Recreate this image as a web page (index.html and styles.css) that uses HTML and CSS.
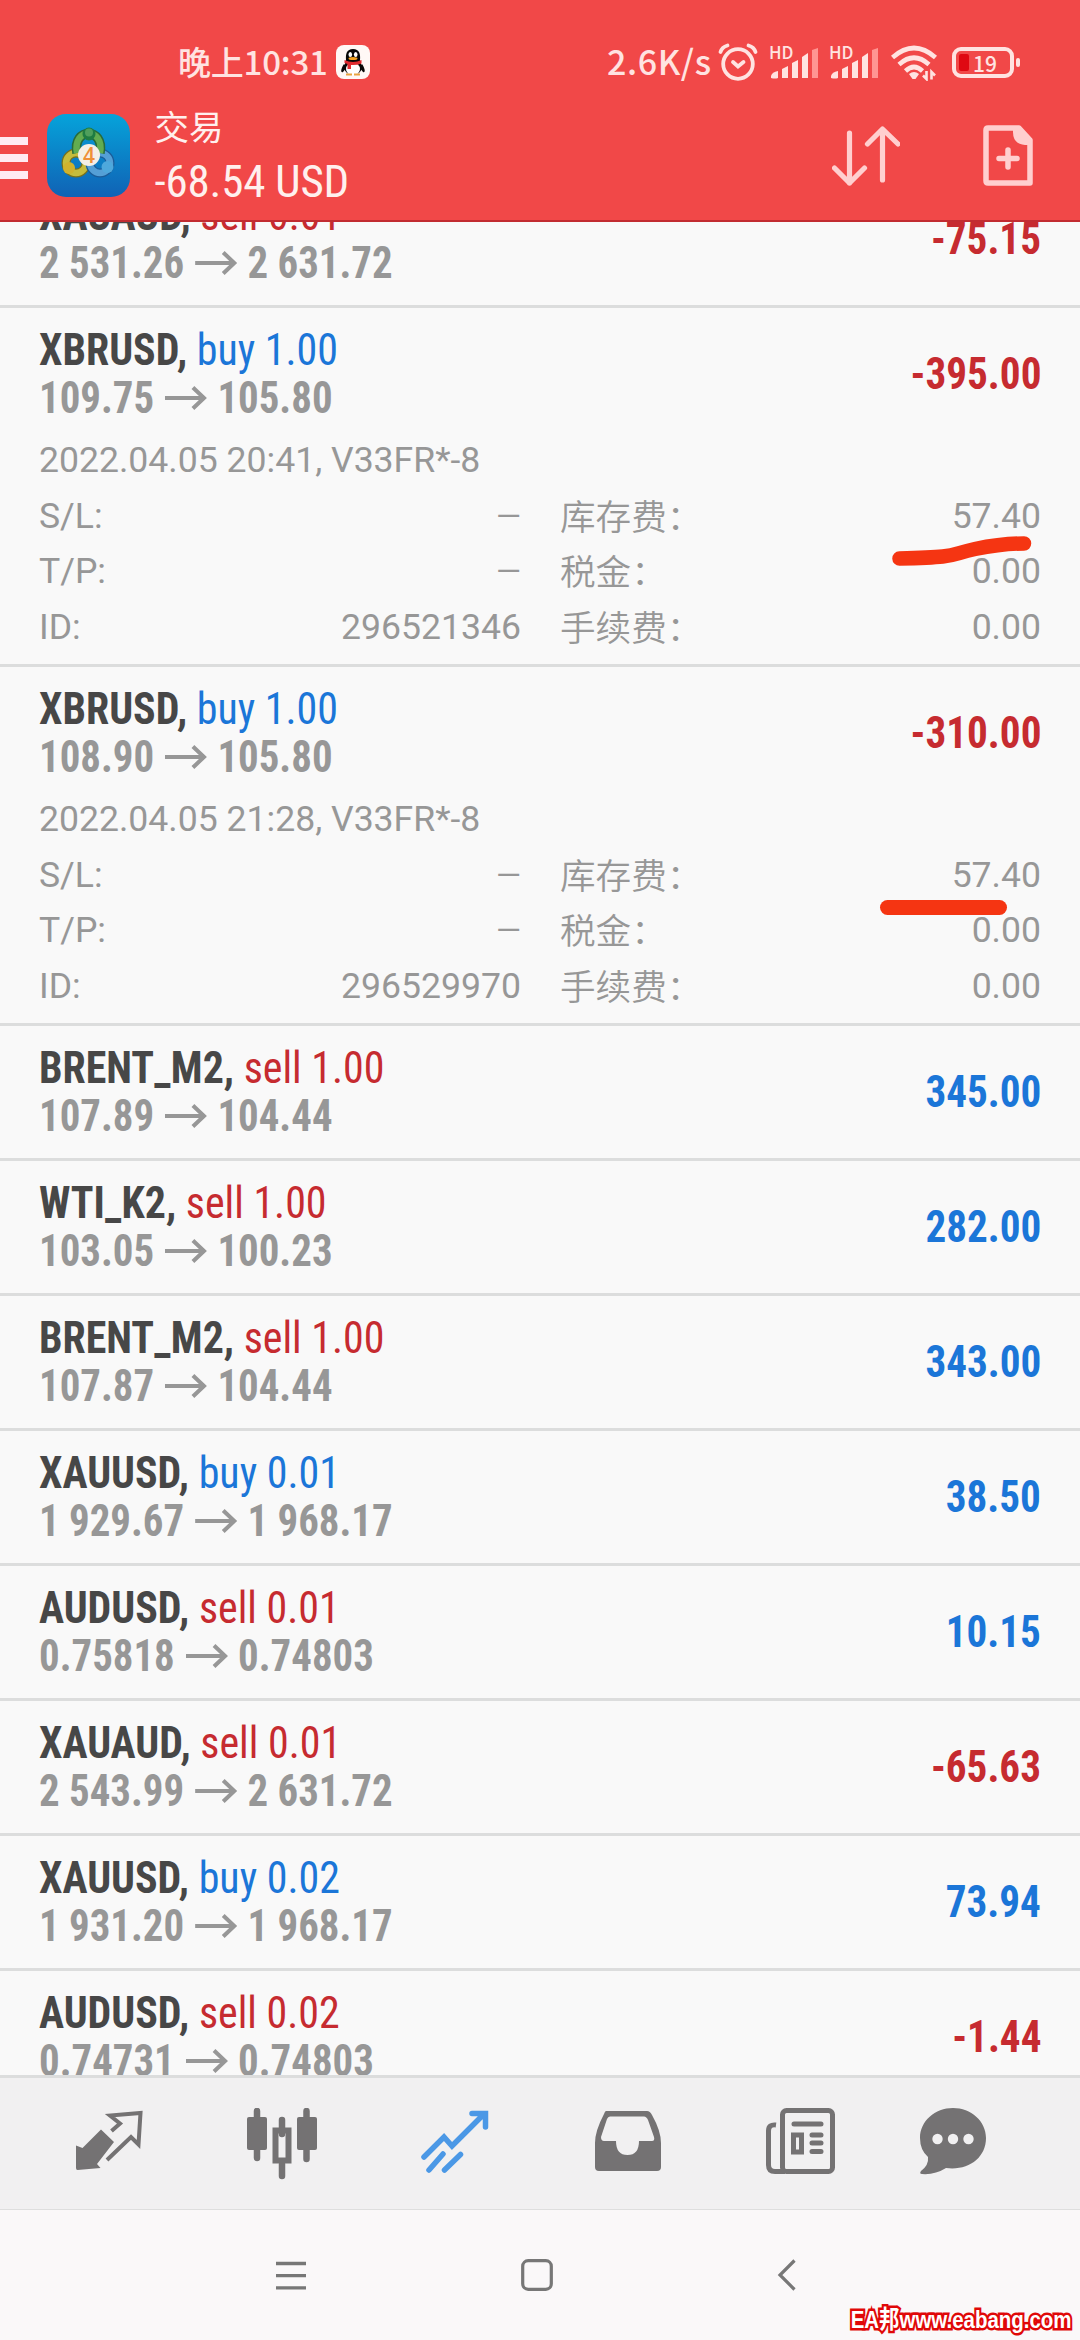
FILE: index.html
```html
<!DOCTYPE html>
<html lang="zh-CN">
<head>
<meta charset="utf-8">
<title>交易</title>
<link rel="stylesheet" href="styles.css">
</head>
<body>
<svg class="defs" width="0" height="0">
  <symbol id="arrow" viewBox="0 0 42 24" preserveAspectRatio="none"><path d="M0 12H40M28 1.500L39 12L28 22.500" fill="none" stroke="#979797" stroke-width="4"/></symbol>
  <symbol id="signal" viewBox="0 0 48 32"><g fill="#ffe3e1"><path d="M0 31V29Q1 25 7 24V31Q4 32 0 31Z"/><path d="M11 31V22L17 19V31Z"/><path d="M21 31V16L27 13V31Z"/><path d="M31 31V10L37 6V31Z"/></g><path d="M41 31V3L47 1V31Z" fill="#ff9592"/></symbol>
</svg>
<div class="screen">
  <header class="header">
    <div class="status">
      <div class="clock"><span>晚上10:31</span>
        <svg class="qq" viewBox="0 0 34 34"><rect width="34" height="34" rx="8" fill="#fff8f6"/><path d="M8 19C4 25 5 28 7 27L11 22ZM26 19C30 25 29 28 27 27L23 22Z" fill="#080808"/><path d="M17 4C10.500 4 9.500 9 10 15L8 23Q10 30 17 30Q24 30 26 23L24 15C24.500 9 23.500 4 17 4Z" fill="#080808"/><ellipse cx="17" cy="24" rx="7" ry="6.500" fill="#fff"/><ellipse cx="14.300" cy="9.500" rx="1.800" ry="2.600" fill="#fff"/><ellipse cx="19.700" cy="9.500" rx="1.800" ry="2.600" fill="#fff"/><ellipse cx="17" cy="13.500" rx="4.500" ry="1.500" fill="#f5a321"/><path d="M8.500 15Q17 19 25.500 15V18.500Q20 20.500 15 20V24H11.500V19L8.500 18Z" fill="#e02b30"/><path d="M10 29.500H16M18 29.500H24" stroke="#e9a440" stroke-width="2"/></svg>
      </div>
      <div class="indicators">
        <span class="speed">2.6K/s</span>
        <svg class="alarm" viewBox="0 0 40 38"><g fill="none" stroke="#ffe3e1" stroke-width="3.800" stroke-linecap="round"><circle cx="20" cy="21" r="14.800"/><path d="M2.500 9Q4 4 9.500 2.500M37.500 9Q36 4 30.500 2.500M15 19L20 23.500L25.500 19"/></g></svg>
        <div class="sim"><b>HD</b><svg viewBox="0 0 48 32"><use href="#signal"/></svg></div>
        <div class="sim"><b>HD</b><svg viewBox="0 0 48 32"><use href="#signal"/></svg></div>
        <svg class="wifi" viewBox="0 0 46 36"><g fill="none" stroke="#ffe3e1" stroke-width="4.600"><path d="M1.500 12.500Q23-6.500 44.500 12.500M8 19.500Q23 6 38 19.500M14.500 26Q23 18 31.500 26"/></g><path d="M18 29Q23 25 28 29L24.500 34H21.500Z" fill="#ffe3e1"/><path d="M35.500 26V34L32 30.500M40.500 34.500V27L44 30.500" fill="none" stroke="#ffe3e1" stroke-width="2.600"/></svg>
        <div class="battery"><i></i><span>19</span></div>
      </div>
    </div>
    <div class="toolbar">
      <div class="burger"><i></i><i></i><i></i></div>
      <svg class="logo" viewBox="0 0 83 83"><defs><linearGradient id="sky" x2="0" y2="1"><stop stop-color="#06a3da"/><stop offset="1" stop-color="#1062b5"/></linearGradient></defs><rect width="83" height="83" rx="19" fill="url(#sky)"/><g fill="none"><circle cx="29" cy="49" r="10" stroke="#77701c" stroke-width="9"/><circle cx="29" cy="49" r="10" stroke="#c6bc3c" stroke-width="6.500"/><circle cx="53" cy="49" r="10" stroke="#1b5c98" stroke-width="9"/><circle cx="53" cy="49" r="10" stroke="#549fd6" stroke-width="6.500"/><path d="M30 39C25 13 58 13 53 39" stroke="#286b3a" stroke-width="9.500"/><path d="M30 39C25 13 58 13 53 39" stroke="#62ac50" stroke-width="6.500"/></g><circle cx="42" cy="20" r="6.500" fill="#1f7c42"/><circle cx="42" cy="18.500" r="4" fill="#4f9f5c"/><circle cx="22" cy="54" r="6" fill="#d0b22d"/><circle cx="60.500" cy="53" r="6" fill="#4ea8dc"/><circle cx="42" cy="41" r="11" fill="#f4efe6"/><text x="42" y="49" text-anchor="middle" class="four">4</text></svg>
      <div class="title"><span class="name">交易</span><span class="total">-68.54 USD</span></div>
      <svg class="sort" viewBox="0 0 68 62"><path d="M17.500 8V58M2.500 43L17.500 58L32.500 43M50.500 55V5M35.500 19L50.500 4L66 19" fill="none" stroke="#ffcfcf" stroke-width="5.200" stroke-linecap="round" stroke-linejoin="round"/></svg>
      <svg class="neworder" viewBox="0 0 50 62"><path d="M5 3H36L47 15V58H5Q3 58 3 56V5Q3 3 5 3Z" fill="none" stroke="#ffcfcf" stroke-width="5.500" stroke-linejoin="round"/><path d="M30 3H37L48 14V20H42Q30 19 30 7Z" fill="#ffcfcf"/><path d="M25 25V42M16 33.500H34" stroke="#ffcfcf" stroke-width="5.500" stroke-linecap="round"/></svg>
    </div>
  </header>

  <main class="list">
    <article class="row first"><div class="head"><div><p class="deal"><b>XAUAUD,</b> <span class="sell">sell 0.01</span></p><p class="price">2 531.26<svg><use href="#arrow"/></svg>2 631.72</p></div><strong class="sell">-75.15</strong></div></article>

    <article class="row">
      <div class="head"><div><p class="deal"><b>XBRUSD,</b> <span class="buy">buy 1.00</span></p><p class="price">109.75<svg><use href="#arrow"/></svg>105.80</p></div><strong class="sell">-395.00</strong></div>
      <div class="details">
        <p class="date">2022.04.05 20:41, V33FR*-8</p>
        <p><span>S/L:</span><span class="none">—</span></p><p><span>库存费：</span><span>57.40</span></p>
        <p><span>T/P:</span><span class="none">—</span></p><p><span>税金：</span><span>0.00</span></p>
        <p><span>ID:</span><span>296521346</span></p><p><span>手续费：</span><span>0.00</span></p>
        <svg class="mark" viewBox="0 0 140 30"><path d="M7.500 22.500C70 21 55 19 83 13C108 8 118 7.500 132 7.500" fill="none" stroke="#f53512" stroke-width="14.500" stroke-linecap="round"/></svg>
      </div>
    </article>

    <article class="row">
      <div class="head"><div><p class="deal"><b>XBRUSD,</b> <span class="buy">buy 1.00</span></p><p class="price">108.90<svg><use href="#arrow"/></svg>105.80</p></div><strong class="sell">-310.00</strong></div>
      <div class="details">
        <p class="date">2022.04.05 21:28, V33FR*-8</p>
        <p><span>S/L:</span><span class="none">—</span></p><p><span>库存费：</span><span>57.40</span></p>
        <p><span>T/P:</span><span class="none">—</span></p><p><span>税金：</span><span>0.00</span></p>
        <p><span>ID:</span><span>296529970</span></p><p><span>手续费：</span><span>0.00</span></p>
        <i class="mark straight"></i>
      </div>
    </article>

    <article class="row"><div class="head"><div><p class="deal"><b>BRENT_M2,</b> <span class="sell">sell 1.00</span></p><p class="price">107.89<svg><use href="#arrow"/></svg>104.44</p></div><strong class="buy">345.00</strong></div></article>
    <article class="row"><div class="head"><div><p class="deal"><b>WTI_K2,</b> <span class="sell">sell 1.00</span></p><p class="price">103.05<svg><use href="#arrow"/></svg>100.23</p></div><strong class="buy">282.00</strong></div></article>
    <article class="row"><div class="head"><div><p class="deal"><b>BRENT_M2,</b> <span class="sell">sell 1.00</span></p><p class="price">107.87<svg><use href="#arrow"/></svg>104.44</p></div><strong class="buy">343.00</strong></div></article>
    <article class="row"><div class="head"><div><p class="deal"><b>XAUUSD,</b> <span class="buy">buy 0.01</span></p><p class="price">1 929.67<svg><use href="#arrow"/></svg>1 968.17</p></div><strong class="buy">38.50</strong></div></article>
    <article class="row"><div class="head"><div><p class="deal"><b>AUDUSD,</b> <span class="sell">sell 0.01</span></p><p class="price">0.75818<svg><use href="#arrow"/></svg>0.74803</p></div><strong class="buy">10.15</strong></div></article>
    <article class="row"><div class="head"><div><p class="deal"><b>XAUAUD,</b> <span class="sell">sell 0.01</span></p><p class="price">2 543.99<svg><use href="#arrow"/></svg>2 631.72</p></div><strong class="sell">-65.63</strong></div></article>
    <article class="row"><div class="head"><div><p class="deal"><b>XAUUSD,</b> <span class="buy">buy 0.02</span></p><p class="price">1 931.20<svg><use href="#arrow"/></svg>1 968.17</p></div><strong class="buy">73.94</strong></div></article>
    <article class="row"><div class="head"><div><p class="deal"><b>AUDUSD,</b> <span class="sell">sell 0.02</span></p><p class="price">0.74731<svg><use href="#arrow"/></svg>0.74803</p></div><strong class="sell">-1.44</strong></div></article>
  </main>

  <nav class="tabs">
    <svg viewBox="0 0 72 72"><path d="M3 37.500L9.500 40L28 21.500L41 34L24 56L27.500 60L4.500 62Q3 62 3 60Z" fill="#747273"/><path d="M38.500 23L47 15.500L37 7.500L67.500 5L65.500 36.500L58 29L34 52" fill="none" stroke="#747273" stroke-width="4"/></svg>
    <svg viewBox="0 0 72 72"><path d="M11 3V50M60.500 3V51M36 12V26M36 56V68" stroke="#747273" stroke-width="6.500" stroke-linecap="round"/><rect x="1" y="9" width="20" height="33" rx="2" fill="#747273"/><rect x="51" y="9" width="20" height="33" rx="2" fill="#747273"/><rect x="29.500" y="22.500" width="13" height="30" fill="none" stroke="#747273" stroke-width="6"/></svg>
    <svg viewBox="0 0 72 72"><path d="M5 49L25 29L33 38L65 6M53 5.500H66.500V19M24 46L10 62M41.500 46.500L25.500 62" fill="none" stroke="#4b98e6" stroke-width="5.500" stroke-linecap="round"/></svg>
    <svg viewBox="0 0 72 72"><path d="M14 3H55Q58 3 60 7Q69 23 69 35V59Q69 63 65 63H7Q3 63 3 59V35Q3 23 12 6Q13 3 14 3ZM18 8.500Q16 8.500 15 11L9 29Q9 33 12 33H24Q24 47 35.500 47Q47 47 47 33H60Q63 33 62 29L56 12Q54.500 8.500 52 8.500Z" fill="#747273" fill-rule="evenodd"/></svg>
    <svg viewBox="0 0 72 72"><g fill="none" stroke="#747273" stroke-width="5"><rect x="17.500" y="2.500" width="50" height="61" rx="4"/><path d="M11 17Q3.500 16 3.500 23V57Q3.500 63.500 10 63.500H20"/><path d="M29 16H56M47 27H56M47 35H56M47 43.500H56" stroke-linecap="round"/><rect x="28.500" y="27" width="8" height="17"/></g></svg>
    <svg viewBox="0 0 72 72"><path d="M36 0C54 0 69 13 69 30C69 50 51 63 29 60Q18 67 5 66Q2 66 4 63Q12 57 11 49Q3 42 3 30C3 13 18 0 36 0Z" fill="#747273"/><g fill="#f1f0f1"><circle cx="20.500" cy="31" r="5.200"/><circle cx="36" cy="31" r="5.200"/><circle cx="51.500" cy="31" r="5.200"/></g></svg>
  </nav>

  <footer class="system">
    <svg class="recents" viewBox="0 0 30 30"><path d="M0 2.500H30M0 14.700H30M0 26.800H30" stroke="#777" stroke-width="3.300"/></svg>
    <svg class="home" viewBox="0 0 32 32"><rect x="1.700" y="1.700" width="28.600" height="28.600" rx="5.500" fill="none" stroke="#777" stroke-width="3.200"/></svg>
    <svg class="back" viewBox="0 0 20 32"><path d="M17.500 1.500L3 16L17.500 30.500" fill="none" stroke="#777" stroke-width="3.200"/></svg>
    <span class="credit">EA邦www.eabang.com</span>
  </footer>
</div>
</body>
</html>
```
FILE: styles.css
```css
* { box-sizing: border-box; }
body { margin: 0; background: #f9f9f9; font-family: Roboto, "Noto Sans CJK SC", sans-serif; }
p { margin: 0; }
svg { display: block; flex: none; }
.defs { position: absolute; }
.screen { width: 1080px; height: 2340px; display: flex; flex-direction: column; overflow: hidden; }

/* header */
.header { height: 222px; flex: none; background: #f14848; border-bottom: 2px solid #c22c31; }
.status { display: flex; height: 100px; padding: 0 60px 0 178px; justify-content: space-between; color: #ffe3e1; }
.clock { display: flex; padding-top: 37px; font: 500 33px/48px "Noto Sans CJK SC", sans-serif; }
.clock span { width: 158px; white-space: nowrap; letter-spacing: -.2px; }
.qq { width: 34px; height: 34px; margin-top: 8px; }
.indicators { display: flex; }
.speed { width: 112px; padding-top: 37px; font: 500 34px/48px "Noto Sans CJK SC", sans-serif; letter-spacing: .6px; }
.alarm { width: 40px; height: 38px; margin: 43px 11px 0 -1px; }
.sim { width: 60px; padding-top: 44px; }
.sim b { display: block; height: 12px; font: 500 17px/16px "Noto Sans CJK SC", sans-serif; }
.sim svg { width: 48px; height: 32px; margin: -9px 0 0 2px; }
.wifi { width: 46px; height: 36px; margin: 45px 15px 0 2px; }
.battery { position: relative; width: 62px; height: 31px; margin: 47px 6px 0 0; border: 4px solid #ffe3e1; border-radius: 9px; display: flex; align-items: center; padding-left: 3px; font: 500 21px/24px "Noto Sans CJK SC", sans-serif; }
.battery i { width: 10px; height: 17px; border-radius: 2px; background: #df0912; margin-right: 4px; }
.battery::after { content: ""; position: absolute; left: 60px; top: 7px; width: 4px; height: 9px; border-radius: 2px; background: #ffe3e1; }
.toolbar { display: flex; height: 120px; }
.burger { display: flex; flex-direction: column; gap: 9px; width: 47px; padding-top: 37px; }
.burger i { width: 28px; height: 8px; background: #ffebf2; }
.logo { width: 83px; height: 83px; margin-top: 14px; }
.four { font: 600 21px "Open Sans", sans-serif; fill: #ef9038; }
.title { display: flex; flex-direction: column; flex: 1; padding-left: 24.500px; color: #fff0ee; }
.name { font: 400 34.500px/50px "Noto Sans CJK SC", sans-serif; }
.total { font: 45px/64px "Roboto Condensed", Roboto, sans-serif; font-stretch: 75%; letter-spacing: -.2px; }
.sort { width: 68px; height: 62px; margin: 25px 83px 0 0; }
.neworder { width: 50px; height: 62px; margin: 25px 47px 0 0; }

/* positions */
.list { height: 1853px; flex: none; overflow: hidden; background: #f9f9f9; }
.row { border-bottom: 3px solid #dcdddd; padding: 18px 39px 18px; }
.row:has(.details) { padding-bottom: 9px; }
.first { margin-top: -49px; }
.head { display: flex; justify-content: space-between; align-items: center; height: 96px; font: 44.500px/48px "Roboto Condensed", Roboto, sans-serif; }
.deal { transform: scaleX(.942); transform-origin: left; }
.deal b { color: #474747; }
.price { display: flex; align-items: center; font-weight: 700; color: #979797; transform: scaleX(.918); transform-origin: left; }
.price svg { width: 46px; height: 24px; margin: 0 11px 0 12px; }
.head strong { transform: scaleX(.925); transform-origin: right; }
.buy { color: #1b76d8; }
.sell { color: #c62b30; }
.details { position: relative; display: grid; grid-template-columns: 482px 481px; column-gap: 39px; margin-top: 11px; font-size: 35.600px; line-height: 55.500px; color: #979797; }
.details p { display: flex; justify-content: space-between; height: 55.500px; font-family: Roboto, sans-serif; }
.details .date { grid-column: 1 / 3; }
.details p:nth-child(odd) span:first-child { font-family: "Noto Sans CJK SC", sans-serif; font-weight: 350; line-height: 51px; }
.details .none { font-size: 32px; }

/* hand-drawn underlines over the swap values */
.mark { position: absolute; left: 853px; top: 103px; width: 140px; height: 30px; }
.straight { left: 841px; top: 108px; width: 127px; height: 15px; border-radius: 8px; background: #f53512; }

/* bottom bars */
.tabs { height: 135px; flex: none; display: grid; grid-template-columns: repeat(5, 173px) 132px; padding: 30px 0 0 22px; justify-items: center; background: #f1f0f1; border-top: 3px solid #dcdddd; border-bottom: 1px solid #dedede; }
.tabs svg { width: 72px; height: 72px; }
.system { position: relative; flex: 1; display: flex; padding: 49px 0 0 276px; background: #faf8f9; }
.recents { width: 30px; height: 30px; margin-top: 2px; }
.home { width: 32px; height: 32px; margin: 0 224px 0 215px; }
.back { width: 20px; height: 32px; }
.credit { position: absolute; right: 8px; bottom: 3px; font: 700 24.500px/34px "Liberation Sans", "Noto Sans CJK SC", sans-serif; white-space: nowrap; color: #fff; -webkit-text-stroke: 5px #e00808; paint-order: stroke fill; transform: scaleX(.835); transform-origin: right; }
```
